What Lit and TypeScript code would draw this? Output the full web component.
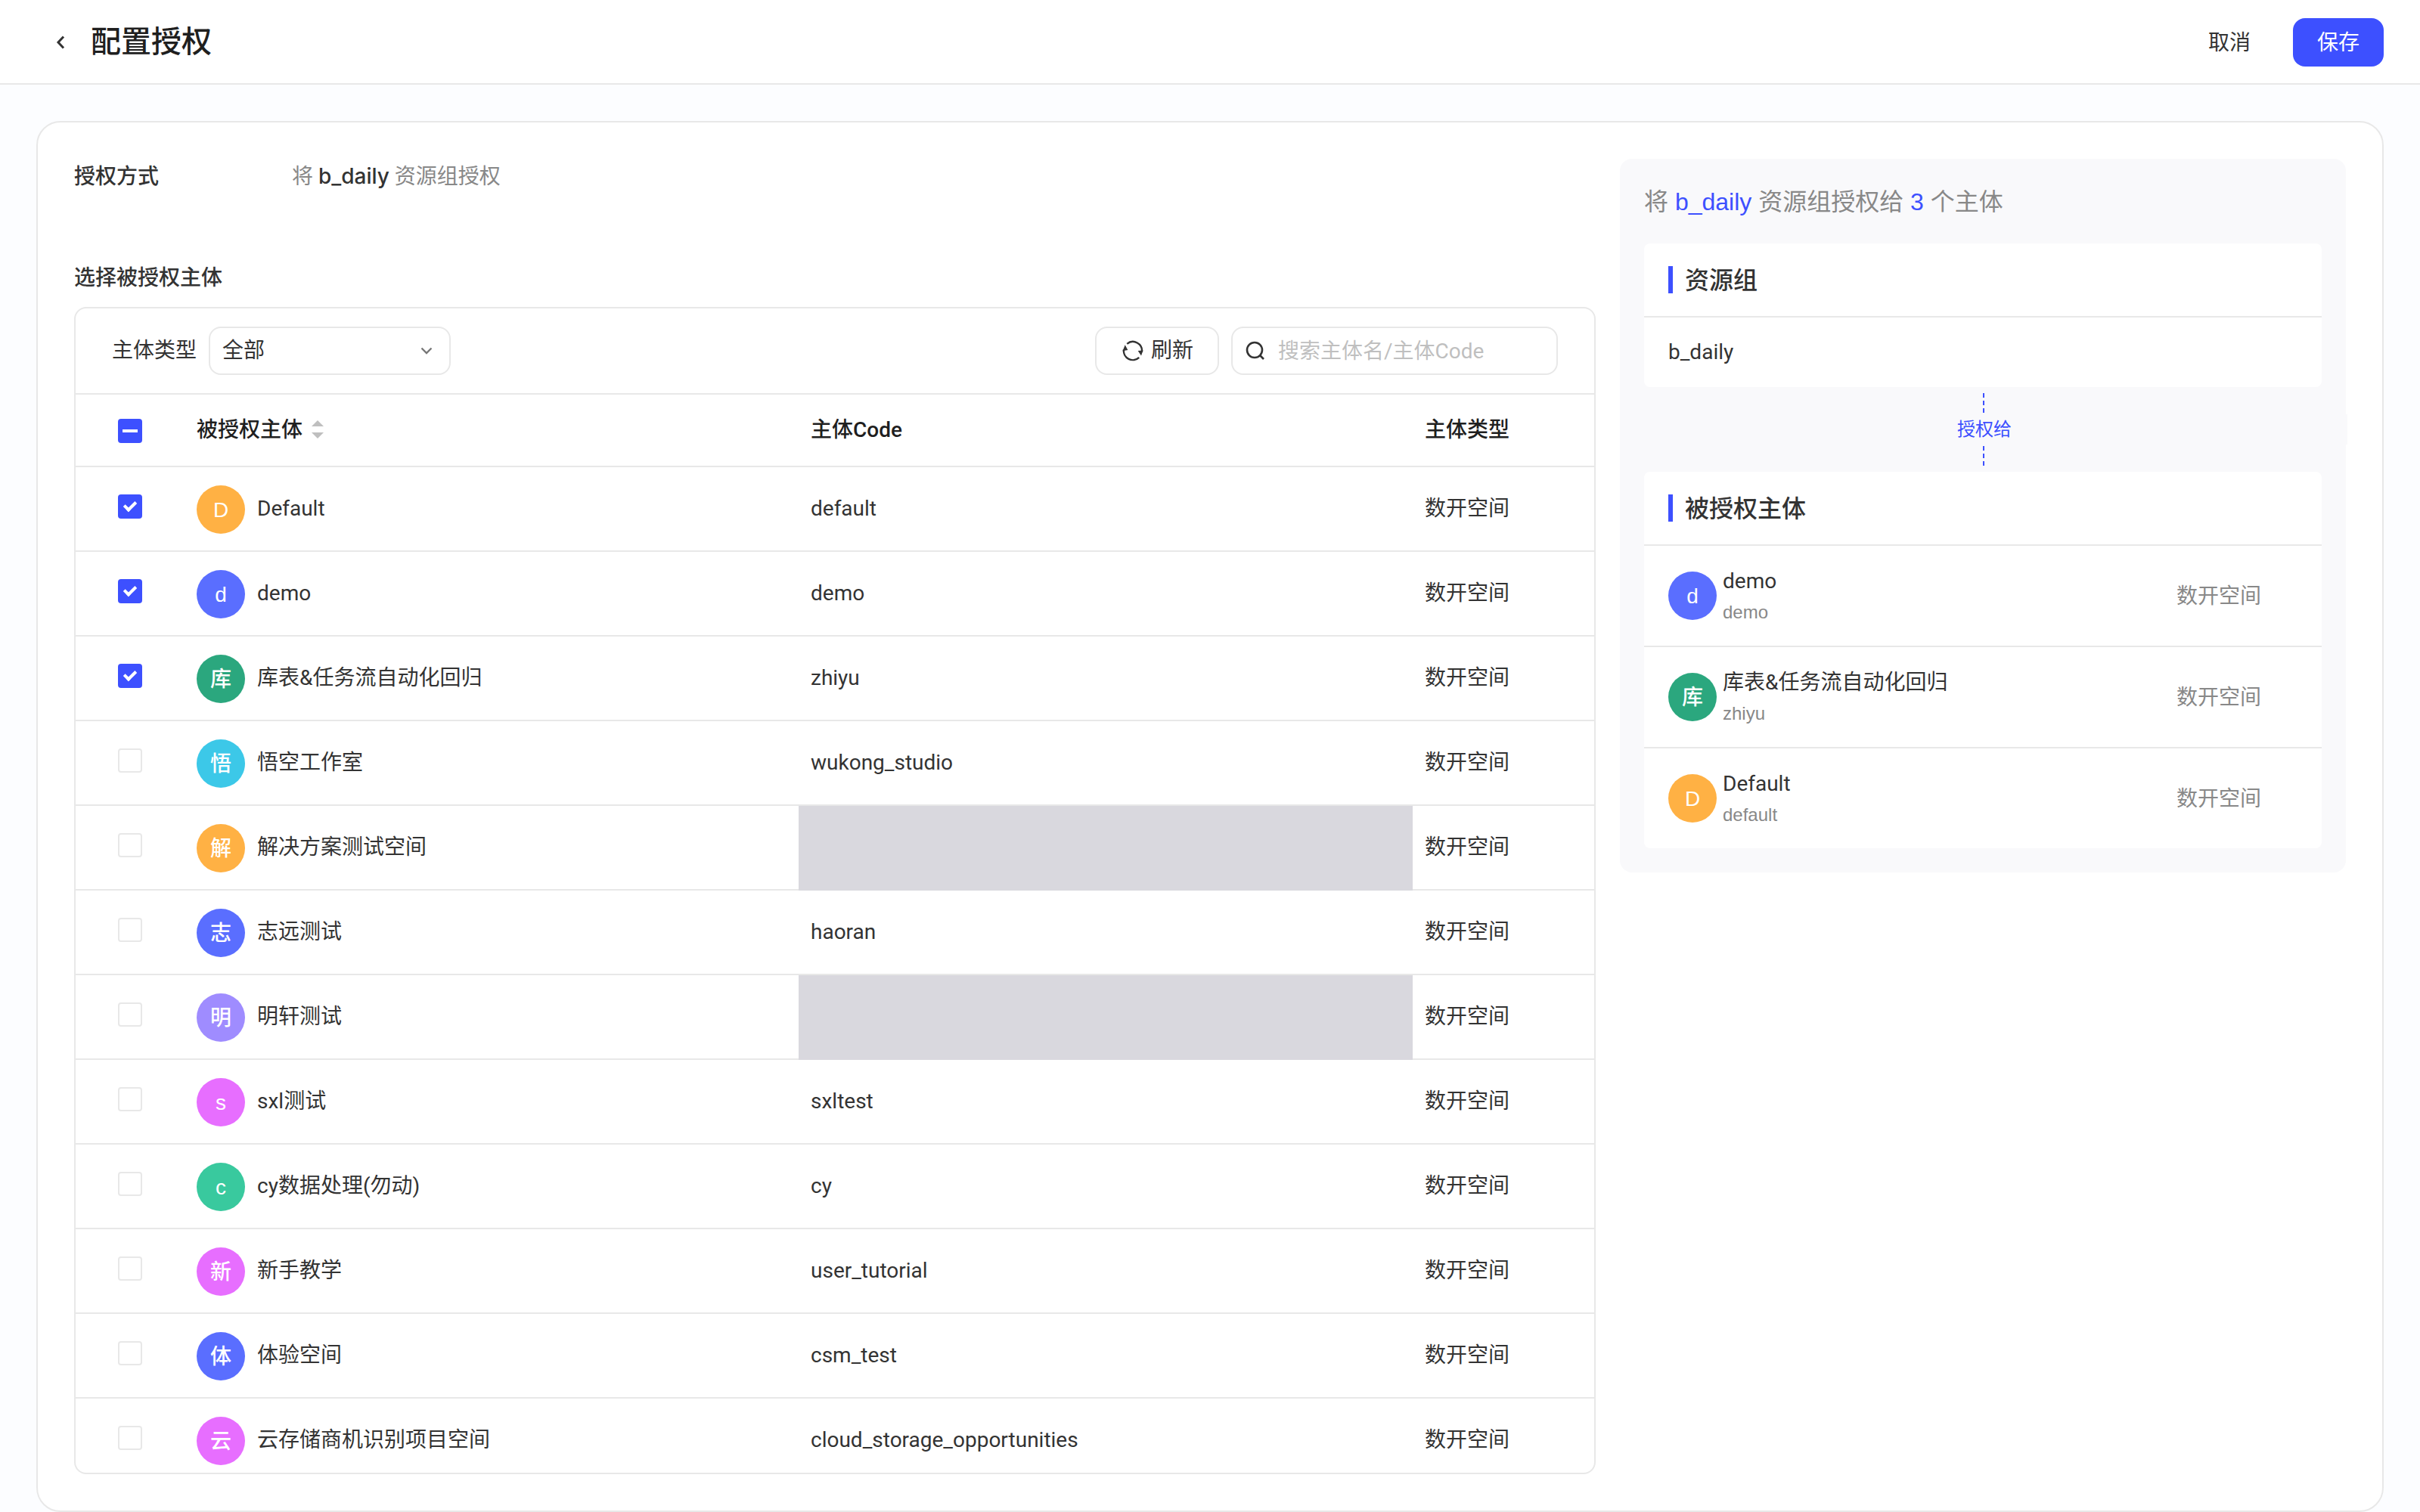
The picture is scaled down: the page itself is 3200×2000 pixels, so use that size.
import { LitElement, html, css, nothing } from "lit";
import { customElement } from "lit/decorators.js";

interface Subject {
  name: string;
  code: string;
  hidden?: boolean;
  tone: string;
  checked?: boolean;
}

const KIND = "数开空间";

const SUBJECTS: Subject[] = [
  { name: "Default", code: "default", tone: "amber", checked: true },
  { name: "demo", code: "demo", tone: "indigo", checked: true },
  { name: "库表&任务流自动化回归", code: "zhiyu", tone: "green", checked: true },
  { name: "悟空工作室", code: "wukong_studio", tone: "cyan" },
  { name: "解决方案测试空间", code: "", hidden: true, tone: "amber" },
  { name: "志远测试", code: "haoran", tone: "indigo" },
  { name: "明轩测试", code: "", hidden: true, tone: "violet" },
  { name: "sxl测试", code: "sxltest", tone: "pink" },
  { name: "cy数据处理(勿动)", code: "cy", tone: "teal" },
  { name: "新手教学", code: "user_tutorial", tone: "pink" },
  { name: "体验空间", code: "csm_test", tone: "indigo" },
  { name: "云存储商机识别项目空间", code: "cloud_storage_opportunities", tone: "pink" },
];

const GRANTED = [SUBJECTS[1], SUBJECTS[2], SUBJECTS[0]];

const avatar = (s: Subject) =>
  html`<span class="avatar ${s.tone}" aria-hidden="true">${Array.from(s.name)[0]}</span>`;

@customElement("app-root")
export class AppRoot extends LitElement {
  static styles = css`
    :host {
      display: flex;
      flex-direction: column;
      height: 100vh;
      box-sizing: border-box;
      background: #fcfdff;
      color: #333;
      font-family: Roboto, "Noto Sans CJK SC", sans-serif;
      font-size: 28px;
      line-height: 44px;
    }
    *, *::before, *::after { box-sizing: border-box; }
    h1, h2, h3, p, ul { margin: 0; padding: 0; font-size: inherit; font-weight: inherit; }
    ul { list-style: none; }
    button, input, select { font: inherit; color: inherit; }
    button { cursor: pointer; }
    svg { display: block; flex: none; }

    .topbar {
      display: flex;
      align-items: center;
      height: 112px;
      flex: none;
      padding: 2px 48px 0 64px;
      background: #fff;
      border-bottom: 2px solid #e8e8e8;
    }
    .back {
      display: flex;
      align-items: center;
      justify-content: center;
      width: 32px;
      height: 32px;
      padding: 0;
      border: 0;
      background: none;
      margin-right: 24px;
    }
    .title { flex: 1; font-size: 40px; font-weight: 500; color: #1f1f1f; }
    .cancel, .save { height: 64px; border: 0; padding: 2px 32px 0; border-radius: 16px; }
    .cancel { background: none; margin-right: 24px; }
    .save { background: #3d50ff; color: #fff; }

    .card {
      flex: 1;
      min-height: 0;
      display: flex;
      gap: 32px;
      margin: 48px 48px 0;
      padding: 48px;
      background: #fff;
      border: 2px solid #e8e8e8;
      border-radius: 32px;
    }
    .main { flex: 1; min-width: 0; display: flex; flex-direction: column; padding-top: 2px; }
    .mode { display: flex; margin-bottom: 90px; color: #888; }
    .mode-label { width: 288px; }
    .mode-label, .section { font-weight: 500; color: #333; }
    .mode b {
      font-family: Inter, "Noto Sans CJK SC", sans-serif;
      font-weight: 500;
      line-height: 1;
      color: #333;
    }
    .section { margin-bottom: 16px; }

    .box {
      flex: 1;
      min-height: 0;
      display: flex;
      flex-direction: column;
      border: 2px solid #e8e8e8;
      border-radius: 16px;
      overflow: hidden;
    }
    .tools {
      display: flex;
      align-items: center;
      gap: 16px;
      flex: none;
      padding: 24px 48px;
      border-bottom: 2px solid #e8e8e8;
    }
    .field {
      display: flex;
      align-items: center;
      height: 64px;
      border: 2px solid #e8e8e8;
      border-radius: 16px;
      background: #fff;
    }
    .pick { width: 320px; margin-right: auto; padding-right: 20px; }
    .pick select {
      appearance: none;
      flex: 1;
      min-width: 0;
      height: 100%;
      padding: 0 0 0 16px;
      border: 0;
      background: none;
      outline: 0;
    }
    .refresh { gap: 10px; padding: 0 32px 0 34px; }
    .search { width: 432px; padding-left: 14px; gap: 14px; }
    .search input { flex: 1; min-width: 0; height: 100%; padding: 0; border: 0; outline: 0; background: none; }
    .search input::placeholder { color: #bfbfbf; opacity: 1; }

    .scroll { flex: 1; min-height: 0; overflow: hidden; }
    .grid { width: 100%; border-collapse: separate; border-spacing: 0; table-layout: fixed; }
    .col-check { width: 144px; }
    .col-kind { width: 240px; }
    .grid th, .grid td { padding: 0 16px; text-align: left; border-bottom: 2px solid #e8e8e8; }
    .grid th { height: 96px; font-weight: 500; color: #1f1f1f; }
    .grid td { height: 112px; }
    .grid .check { padding: 2px 0 0 56px; }
    .grid td.check { padding: 0 0 6px 56px; }
    .grid td.masked { background: #d9d8de; border-bottom-color: #d9d8de; }
    .sorter { display: flex; align-items: center; gap: 12px; }
    .who { display: flex; align-items: center; gap: 16px; }
    .who .avatar { margin-top: 2px; }

    .tick {
      appearance: none;
      display: block;
      width: 32px;
      height: 32px;
      margin: 0;
      border: 2px solid #e8e8e8;
      border-radius: 4px;
      background: #fff;
    }
    .tick:checked, .tick:indeterminate { border: 0; background: #3d50ff; display: grid; place-items: center; }
    .tick:checked::before {
      content: "";
      width: 16px;
      height: 10px;
      border: solid #fff;
      border-width: 0 0 4px 4px;
      transform: translateY(-2px) rotate(-45deg);
    }
    .tick:indeterminate::before { content: ""; width: 20px; height: 4px; background: #fff; }

    .avatar {
      display: flex;
      align-items: center;
      justify-content: center;
      flex: none;
      width: 64px;
      height: 64px;
      padding-top: 2px;
      border-radius: 50%;
      color: #fff;
      font-family: "Liberation Sans", "Noto Sans CJK SC", sans-serif;
      font-weight: 500;
    }
    .amber { background: #ffb144; }
    .indigo { background: #5a6eff; }
    .green { background: #2ba77e; }
    .cyan { background: #3cc8e8; }
    .violet { background: #9f8cff; }
    .pink { background: #e76eff; }
    .teal { background: #39c99e; }

    .summary {
      width: 960px;
      flex: none;
      align-self: flex-start;
      padding: 34px 32px 32px;
      border-radius: 16px;
      background: #f9f9fb;
    }
    .headline {
      margin-bottom: 32px;
      font-family: "Liberation Sans", "Noto Sans CJK SC", sans-serif;
      font-size: 32px;
      line-height: 46px;
      color: #888;
    }
    .headline em { font-style: normal; color: #3d50ff; }
    .panel { background: #fff; border-radius: 8px; }
    .panel-title {
      display: flex;
      align-items: center;
      gap: 16px;
      height: 98px;
      padding: 0 32px;
      border-bottom: 2px solid #e8e8e8;
      font-size: 32px;
      font-weight: 500;
    }
    .panel-title span { padding-top: 2px; }
    .panel-title::before { content: ""; width: 6px; height: 36px; background: #3d50ff; }
    .plain { padding: 24px 32px; }
    .granted { display: flex; align-items: center; gap: 8px; padding: 24px 80px 24px 32px; }
    .granted + .granted { border-top: 2px solid #e8e8e8; }
    .names { flex: 1; min-width: 0; line-height: 46px; }
    .code {
      padding-bottom: 2px;
      font-family: "Liberation Sans", "Noto Sans CJK SC", sans-serif;
      font-size: 24px;
      line-height: 36px;
      color: #888;
    }
    .kind { padding-top: 2px; color: #888; }
    .link {
      display: flex;
      flex-direction: column;
      align-items: center;
      margin: 0 -34px 0 -30px;
      padding: 8px 0;
    }
    .link-text {
      align-self: stretch;
      margin: 2px 0;
      background: #f9f9fb;
      color: #3d50ff;
      text-align: center;
      font-size: 24px;
      line-height: 40px;
    }
  `;

  private dashes() {
    return html`<svg width="4" height="26" viewBox="0 0 4 26" aria-hidden="true">
      <path d="M1 0V26" stroke="#3d50ff" stroke-width="2" stroke-dasharray="6 4" />
    </svg>`;
  }

  render() {
    return html`
      <header class="topbar">
        <button class="back" type="button" aria-label="返回">
          <svg width="32" height="32" viewBox="0 0 32 32" fill="none" stroke="#333" stroke-width="3">
            <path d="M20 8.500L13 16L20 23.500" />
          </svg>
        </button>
        <h1 class="title">配置授权</h1>
        <button class="cancel" type="button">取消</button>
        <button class="save" type="button">保存</button>
      </header>

      <main class="card">
        <section class="main">
          <div class="mode">
            <span class="mode-label">授权方式</span>
            <p>将 <b>b_daily</b> 资源组授权</p>
          </div>
          <h2 class="section">选择被授权主体</h2>
          <div class="box">
            <div class="tools">
              <label for="kind">主体类型</label>
              <div class="field pick">
                <select id="kind"><option>全部</option></select>
                <svg width="20" height="20" viewBox="0 0 20 20" fill="none" stroke="#777" stroke-width="2.400">
                  <path d="M3.500 6.500L10 13L16.500 6.500" />
                </svg>
              </div>
              <button class="field refresh" type="button">
                <svg width="28" height="28" viewBox="0 0 28 28" fill="none" stroke="#333" stroke-width="2.400">
                  <path d="M6.300 4.800A12 12 0 0 1 25.900 15.500M22.200 22.800A12 12 0 0 1 2 12.500" />
                  <path d="M3.700 6.200L7.300 13L0.500 14.200ZM20.700 14L27.500 13.500L25 20.500Z" fill="#333" stroke="none" />
                </svg>
                刷新
              </button>
              <div class="field search">
                <svg width="32" height="32" viewBox="0 0 32 32" fill="none" stroke="#333" stroke-width="2.600">
                  <circle cx="15" cy="15" r="10" />
                  <path d="M22 22L27 27" />
                </svg>
                <input type="text" placeholder="搜索主体名/主体Code" aria-label="搜索主体名/主体Code" />
              </div>
            </div>
            <div class="scroll">
              <table class="grid">
                <colgroup>
                  <col class="col-check" />
                  <col />
                  <col />
                  <col class="col-kind" />
                </colgroup>
                <thead>
                  <tr>
                    <th class="check">
                      <input class="tick" type="checkbox" .indeterminate=${true} aria-label="全选" />
                    </th>
                    <th>
                      <span class="sorter">被授权主体
                        <svg width="16" height="26" viewBox="0 0 16 26" fill="#bfbfbf" aria-hidden="true">
                          <path d="M8 0L16 8H0ZM8 24L0 16H16Z" />
                        </svg>
                      </span>
                    </th>
                    <th>主体Code</th>
                    <th>主体类型</th>
                  </tr>
                </thead>
                <tbody>
                  ${SUBJECTS.map(
                    (s) => html`<tr>
                      <td class="check">
                        <input class="tick" type="checkbox" .checked=${!!s.checked} aria-label=${s.name} />
                      </td>
                      <td><div class="who">${avatar(s)}<span>${s.name}</span></div></td>
                      <td class=${s.hidden ? "masked" : nothing}>${s.code}</td>
                      <td>${KIND}</td>
                    </tr>`
                  )}
                </tbody>
              </table>
            </div>
          </div>
        </section>

        <aside class="summary">
          <h2 class="headline">将 <em>b_daily</em> 资源组授权给 <em>${GRANTED.length}</em> 个主体</h2>
          <section class="panel">
            <h3 class="panel-title"><span>资源组</span></h3>
            <p class="plain">b_daily</p>
          </section>
          <div class="link">
            ${this.dashes()}
            <span class="link-text">授权给</span>
            ${this.dashes()}
          </div>
          <section class="panel">
            <h3 class="panel-title"><span>被授权主体</span></h3>
            <ul>
              ${GRANTED.map(
                (s) => html`<li class="granted">
                  ${avatar(s)}
                  <div class="names">
                    <p>${s.name}</p>
                    <p class="code">${s.code}</p>
                  </div>
                  <span class="kind">${KIND}</span>
                </li>`
              )}
            </ul>
          </section>
        </aside>
      </main>
    `;
  }
}
